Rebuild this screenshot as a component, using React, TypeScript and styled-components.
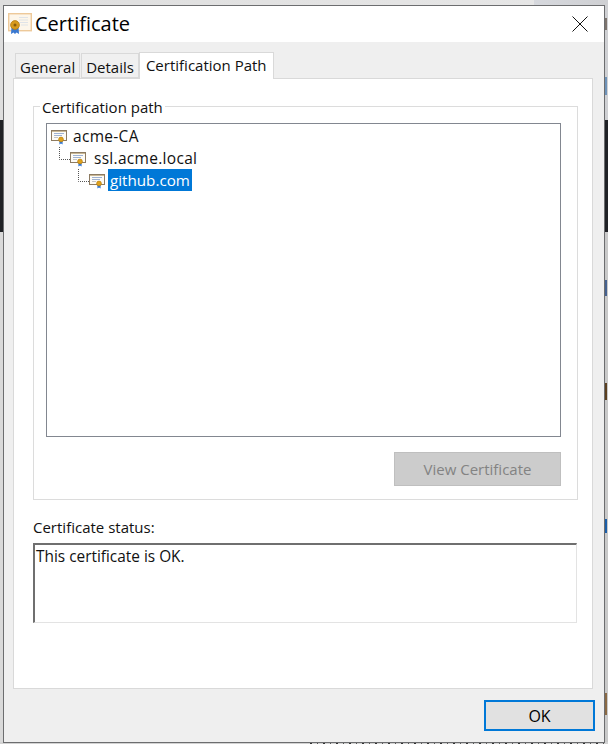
import React from 'react';
import styled, { createGlobalStyle } from 'styled-components';

const GlobalStyle = createGlobalStyle`
  html, body {
    margin: 0;
    padding: 0;
    background: #d2d2d2;
  }
  * {
    box-sizing: border-box;
  }
`;

const Screen = styled.div`
  position: relative;
  width: 608px;
  height: 744px;
  overflow: hidden;
  font-family: 'Open Sans', 'Noto Sans', sans-serif;
  color: #000;
`;

// what shows of the page behind the dialog
const Backdrop = styled.div`
  display: flex;
  flex-direction: column;
  height: 100%;
`;

const TopBand = styled.div`
  height: 120px;
  background: linear-gradient(90deg, #dedede 0, #e6e6e6 534px, #d6d8dd 534px, #cfd0d3 100%);
`;

const DarkBand = styled.div`
  height: 112px;
  background: #1f2125;
`;

const LowBand = styled.div`
  flex: 1;
  background: linear-gradient(90deg, #d9d9d9 0, #d9d9d9 4px, #c9c9c9 4px);
`;

const BottomStrip = styled.div`
  height: 2px;
  margin-left: 310px;
  background: repeating-linear-gradient(90deg, #333 0 2px, transparent 2px 7px, #555 7px 8px, transparent 8px 13px);
`;

const EdgeMark = styled.div<{ $top: number; $height: number; $color: string }>`
  position: absolute;
  right: 1px;
  top: ${(p) => p.$top}px;
  width: 3px;
  height: ${(p) => p.$height}px;
  background: ${(p) => p.$color};
`;

const Dialog = styled.div`
  position: absolute;
  left: 3px;
  top: 5px;
  width: 602px;
  height: 738px;
  display: flex;
  flex-direction: column;
  border: 1px solid #6c6d6f;
  background: #efefef;
`;

const TitleBar = styled.div`
  height: 36px;
  flex: none;
  display: flex;
  align-items: center;
  gap: 3px;
  padding: 0 16px 0 4px;
  background: #fff;
`;

const TitleText = styled.span`
  flex: 1;
  font-size: 20px;
  line-height: 36px;
`;

const TabRow = styled.div`
  height: 36px;
  flex: none;
  display: flex;
  align-items: flex-end;
  padding-left: 11px;
  gap: 1px;
`;

const Tab = styled.div<{ $active?: boolean }>`
  height: ${(p) => (p.$active ? 27 : 25)}px;
  margin-bottom: ${(p) => (p.$active ? -1 : 0)}px;
  margin-left: ${(p) => (p.$active ? -1 : 0)}px;
  padding: ${(p) => (p.$active ? '0 6px 2px' : '2px 4px 0')};
  position: relative;
  z-index: ${(p) => (p.$active ? 1 : 0)};
  display: flex;
  align-items: center;
  font-size: 15px;
  color: #111;
  background: ${(p) => (p.$active ? '#fff' : '#f0f0f0')};
  border: 1px solid #d9d9d9;
  border-bottom: ${(p) => (p.$active ? 'none' : '1px solid #d9d9d9')};
`;

const PagePanel = styled.div`
  width: 580px;
  height: 611px;
  flex: none;
  margin-left: 9px;
  padding: 16px 14px 0 19px;
  background: #fff;
  border: 1px solid #d9d9d9;
`;

const PathGroup = styled.fieldset`
  margin: 0;
  padding: 6px 16px 0 12px;
  height: 405px;
  border: 1px solid #dcdcdc;
`;

const GroupLegend = styled.legend`
  margin-left: -6px;
  padding: 2px 2px 0;
  font-size: 15px;
  line-height: 20px;
  color: #111;
`;

const TreeBox = styled.div`
  height: 314px;
  padding: 1px 0 0 4px;
  border: 1px solid #828790;
`;

const TreeRow = styled.div`
  display: flex;
  align-items: center;
  height: 22px;
`;

const Label = styled.span<{ $selected?: boolean; $gap?: number }>`
  margin-left: ${(p) => p.$gap ?? 4}px;
  padding: 0 2px;
  height: 22px;
  line-height: 22px;
  font-size: ${(p) => (p.$selected ? 15.2 : 15.5)}px;
  letter-spacing: ${(p) => (p.$selected ? 0 : 0.3)}px;
  color: ${(p) => (p.$selected ? '#fff' : '#111')};
  background: ${(p) => (p.$selected ? '#0078d7' : 'transparent')};
`;

const ButtonRow = styled.div`
  display: flex;
  justify-content: flex-end;
  margin-top: 15px;
`;

const ViewButton = styled.button`
  width: 167px;
  height: 34px;
  padding: 0;
  font: inherit;
  font-size: 15px;
  color: #838383;
  background: #cccccc;
  border: 1px solid #bfbfbf;
`;

const StatusLabel = styled.div`
  margin-top: 15px;
  height: 24px;
  line-height: 24px;
  font-size: 15px;
  color: #111;
`;

const StatusBox = styled.div`
  width: 544px;
  height: 80px;
  margin-top: 4px;
  padding: 3px 1px 0;
  font-size: 15.4px;
  line-height: 18px;
  color: #111;
  border-style: solid;
  border-width: 2px 1px 1px 2px;
  border-color: #6f6f6f #e3e3e3 #e3e3e3 #6f6f6f;
`;

const Footer = styled.div`
  flex: 1;
  display: flex;
  justify-content: flex-end;
  align-items: flex-start;
  padding: 11px 9px 0 0;
`;

const OkButton = styled.button`
  width: 111px;
  height: 31px;
  padding: 0;
  font: inherit;
  font-size: 16px;
  color: #000;
  background: #e1e1e1;
  border: 2px solid #0078d7;
`;

const NodeIcon = styled.svg`
  flex: none;
  margin-top: 2px;
`;

const Elbow = styled.svg`
  flex: none;
`;

const Spacer = styled.div`
  width: 19px;
  flex: none;
`;

const CloseIcon = () => (
  <svg width="16" height="16" viewBox="0 0 16 16" fill="none" stroke="#111" strokeWidth="1">
    <path d="M0.5 0.5 L15.5 15.5 M15.5 0.5 L0.5 15.5" />
  </svg>
);

const TitleCertIcon = () => (
  <svg width="24" height="24" viewBox="0 0 24 24">
    <rect x="0.7" y="1.7" width="22.6" height="17" fill="#fdf6ea" stroke="#edc99a" strokeWidth="1.4" />
    <path d="M11 5.5h9M11 8h9M11 10.5h9M13 13h7" stroke="#dfe3e8" strokeWidth="1.2" />
    <path d="M3.5 15 L3 22 L5.5 20.5 L7 22 L8.5 20.5 L11 22 L10.5 15Z" fill="#3a78d0" />
    <circle cx="7" cy="13" r="4.4" fill="#d79a1c" stroke="#b67c10" strokeWidth="0.8" />
    <circle cx="7" cy="13" r="1.5" fill="#8a5c0a" />
  </svg>
);

const CertIcon = () => (
  <NodeIcon width="16" height="15" viewBox="0 0 16 15">
    <rect x="0.5" y="0.5" width="15" height="10" fill="#fdfbf6" stroke="#8d7b62" />
    <path d="M1 1.5h14" stroke="#c9b896" />
    <path d="M3 3.5h10M3 5.5h8" stroke="#9fb2d2" />
    <path d="M3 7.5h4" stroke="#c5c5c5" />
    <path d="M8.4 10.5v4l1.6-.9 1.6.9v-4z" fill="#2f76d6" />
    <circle cx="10" cy="9.5" r="2.4" fill="#e0a21c" stroke="#b97f0e" strokeWidth="0.7" />
  </NodeIcon>
);

// elbow between a tree node and its parent
const Connector = () => (
  <Elbow width="19" height="22" viewBox="0 0 19 22">
    <path d="M8.5 0V12.5H19" fill="none" stroke="#555" strokeDasharray="1 1" />
  </Elbow>
);

export default function App() {
  return (
    <>
      <GlobalStyle />
      <Screen>
        <Backdrop>
          <TopBand />
          <DarkBand />
          <LowBand />
          <BottomStrip />
        </Backdrop>
        <EdgeMark $top={18} $height={12} $color="#7d746e" />
        <EdgeMark $top={77} $height={18} $color="#6f93b8" />
        <EdgeMark $top={280} $height={16} $color="#46628f" />
        <EdgeMark $top={383} $height={17} $color="#5b4020" />
        <EdgeMark $top={519} $height={14} $color="#1c5fa8" />
        <EdgeMark $top={693} $height={22} $color="#8a6a45" />

        <Dialog>
          <TitleBar>
            <TitleCertIcon />
            <TitleText>Certificate</TitleText>
            <CloseIcon />
          </TitleBar>

          <TabRow>
            <Tab>General</Tab>
            <Tab>Details</Tab>
            <Tab $active>Certification Path</Tab>
          </TabRow>

          <PagePanel>
            <PathGroup>
              <GroupLegend>Certification path</GroupLegend>
              <TreeBox>
                <TreeRow>
                  <CertIcon />
                  <Label>acme-CA</Label>
                </TreeRow>
                <TreeRow>
                  <Connector />
                  <CertIcon />
                  <Label $gap={6}>ssl.acme.local</Label>
                </TreeRow>
                <TreeRow>
                  <Spacer />
                  <Connector />
                  <CertIcon />
                  <Label $selected $gap={3}>github.com</Label>
                </TreeRow>
              </TreeBox>
              <ButtonRow>
                <ViewButton disabled>View Certificate</ViewButton>
              </ButtonRow>
            </PathGroup>

            <StatusLabel>Certificate status:</StatusLabel>
            <StatusBox>This certificate is OK.</StatusBox>
          </PagePanel>

          <Footer>
            <OkButton>OK</OkButton>
          </Footer>
        </Dialog>
      </Screen>
    </>
  );
}
